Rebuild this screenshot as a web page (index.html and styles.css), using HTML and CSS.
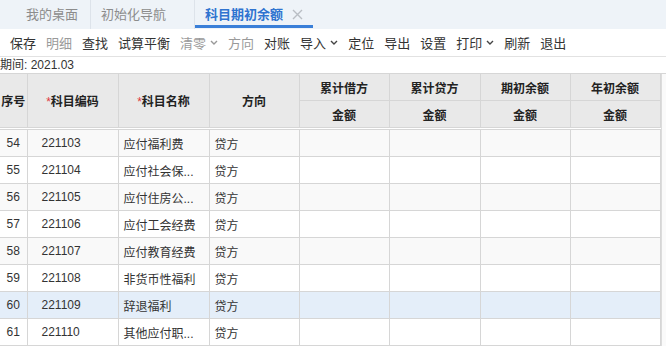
FILE: index.html
```html
<!DOCTYPE html>
<html lang="zh-CN">
<head>
    <meta charset="UTF-8">
    <title>科目期初余额</title>
    <link rel="stylesheet" href="styles.css">
</head>
<body>
    <div class="tabs">
        <div class="tab first">我的桌面</div>
        <div class="tab second">初始化导航</div>
        <div class="tab active">科目期初余额<svg class="close" width="11" height="11" viewBox="0 0 11 11"><path d="M1 1l9 9M10 1l-9 9" stroke="#b9bec4" stroke-width="1.4" fill="none"/></svg></div>
    </div>

    <div class="toolbar">
        <span class="tool">保存</span>
        <span class="tool off">明细</span>
        <span class="tool">查找</span>
        <span class="tool">试算平衡</span>
        <span class="tool off">清零<svg class="caret" width="8" height="5" viewBox="0 0 8 5"><path d="M1 1l3 3 3-3" fill="none" stroke="#999" stroke-width="1.4"/></svg></span>
        <span class="tool off">方向</span>
        <span class="tool">对账</span>
        <span class="tool">导入<svg class="caret" width="8" height="5" viewBox="0 0 8 5"><path d="M1 1l3 3 3-3" fill="none" stroke="#444" stroke-width="1.4"/></svg></span>
        <span class="tool">定位</span>
        <span class="tool">导出</span>
        <span class="tool">设置</span>
        <span class="tool">打印<svg class="caret" width="8" height="5" viewBox="0 0 8 5"><path d="M1 1l3 3 3-3" fill="none" stroke="#444" stroke-width="1.4"/></svg></span>
        <span class="tool">刷新</span>
        <span class="tool">退出</span>
    </div>

    <div class="period">期间: 2021.03</div>

    <div class="grid-wrap">
        <table class="grid">
            <colgroup>
                <col style="width:27px">
                <col style="width:91px">
                <col style="width:91px">
                <col style="width:90px">
                <col style="width:90px">
                <col style="width:91px">
                <col style="width:90px">
                <col style="width:90px">
            </colgroup>
            <thead>
                <tr>
                    <th rowspan="2">序号</th>
                    <th rowspan="2"><span class="req">*</span>科目编码</th>
                    <th rowspan="2"><span class="req">*</span>科目名称</th>
                    <th rowspan="2">方向</th>
                    <th>累计借方</th>
                    <th>累计贷方</th>
                    <th>期初余额</th>
                    <th>年初余额</th>
                </tr>
                <tr class="sub">
                    <th>金额</th>
                    <th>金额</th>
                    <th>金额</th>
                    <th>金额</th>
                </tr>
            </thead>
            <tbody>
                <tr class="alt"><td class="no">54</td><td class="code">221103</td><td>应付福利费</td><td>贷方</td><td></td><td></td><td></td><td></td></tr>
                <tr><td class="no">55</td><td class="code">221104</td><td>应付社会保...</td><td>贷方</td><td></td><td></td><td></td><td></td></tr>
                <tr class="alt"><td class="no">56</td><td class="code">221105</td><td>应付住房公...</td><td>贷方</td><td></td><td></td><td></td><td></td></tr>
                <tr><td class="no">57</td><td class="code">221106</td><td>应付工会经费</td><td>贷方</td><td></td><td></td><td></td><td></td></tr>
                <tr class="alt"><td class="no">58</td><td class="code">221107</td><td>应付教育经费</td><td>贷方</td><td></td><td></td><td></td><td></td></tr>
                <tr><td class="no">59</td><td class="code">221108</td><td>非货币性福利</td><td>贷方</td><td></td><td></td><td></td><td></td></tr>
                <tr class="selected"><td class="no">60</td><td class="code">221109</td><td>辞退福利</td><td>贷方</td><td></td><td></td><td></td><td></td></tr>
                <tr><td class="no">61</td><td class="code">221110</td><td>其他应付职...</td><td>贷方</td><td></td><td></td><td></td><td></td></tr>
            </tbody>
        </table>
        <div class="vscroll"></div>
    </div>
</body>
</html>
```

FILE: styles.css
```css
body {
    margin: 0;
    font-family: 'Liberation Sans', 'Noto Sans CJK SC', sans-serif;
    font-size: 12px;
    color: #333;
    background: #fff;
    overflow: hidden;
    width: 666px;
    height: 349px;
}
.tabs {
    display: flex;
    height: 29px;
    background: #eef3f8;
    padding-left: 14px;
    box-sizing: border-box;
}
.tab {
    font-size: 13px;
    line-height: 29px;
    color: #8c8c8c;
    position: relative;
    box-sizing: border-box;
}
.tab.first {
    padding: 0 12px;
    border-right: 1px solid #dde3ea;
}
.tab.second {
    padding: 0 28px 0 10px;
    border-right: 1px solid #dde3ea;
}
.tab.active {
    padding: 0 10px;
    color: #2f74d0;
    font-weight: bold;
    display: flex;
    align-items: center;
}
.tab.active::after {
    content: '';
    position: absolute;
    left: 0;
    right: 0;
    bottom: 1px;
    height: 3px;
    background: #3a7fd8;
}
.close {
    margin-left: 9px;
}
.toolbar {
    display: flex;
    align-items: center;
    gap: 10px;
    height: 27px;
    padding-left: 10px;
    border-bottom: 1px solid #e2e2e2;
    font-size: 13px;
    font-family: 'Noto Sans CJK SC', sans-serif;
}
.tool {
    display: flex;
    align-items: center;
    color: #333;
}
.tool.off {
    color: #9a9a9a;
}
.caret {
    margin-left: 4px;
}
.period {
    height: 16px;
    line-height: 16px;
    font-size: 12px;
    color: #333;
}
.grid-wrap {
    display: flex;
    border-top: 1px solid #d6d6d6;
}
.grid {
    border-collapse: collapse;
    table-layout: fixed;
    width: 660px;
}
.grid th,
.grid td {
    border: 1px solid #d6d6d6;
    height: 26px;
    padding: 0 5px;
    white-space: nowrap;
    overflow: hidden;
    font-size: 12px;
}
.grid th {
    background: #e9e9e9;
    font-weight: bold;
    color: #222;
    padding: 0;
    text-align: center;
}
.grid thead tr:first-child th {
    border-top: none;
}
.grid th:first-child,
.grid td:first-child {
    border-left: none;
}
.grid thead tr:first-child th[rowspan],
.grid tr.sub th {
    border-bottom: 3px double #d6d6d6;
}
.req {
    color: #e0393e;
    font-weight: normal;
}
.grid td.no {
    text-align: center;
    padding: 0;
}
.grid td.code {
    padding-left: 14px;
}
.grid tr.alt td {
    background: #f9f9f9;
}
.grid tr.selected td {
    background: #e4eef9;
}
.vscroll {
    width: 6px;
    border-left: 1px solid #dcdcdc;
    background: #fafafa;
}
```
